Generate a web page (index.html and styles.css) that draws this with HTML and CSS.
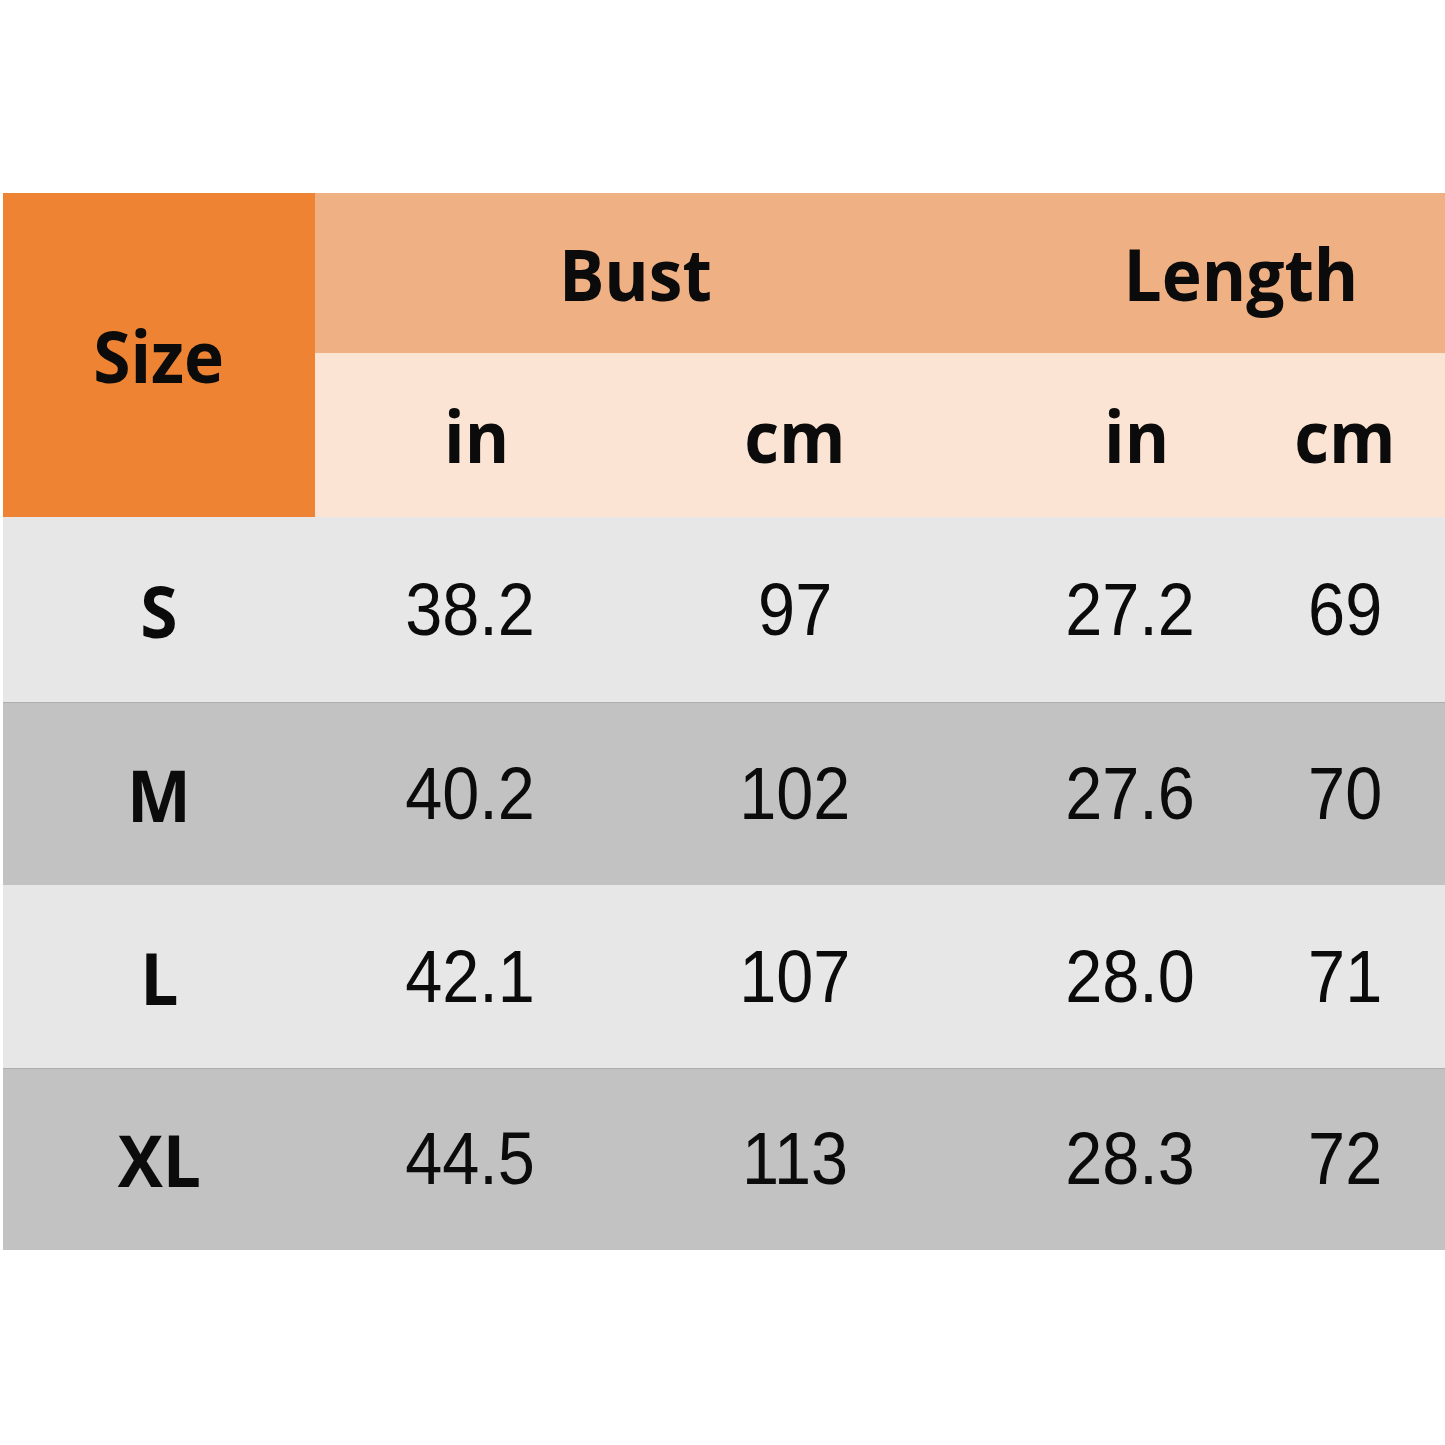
FILE: index.html
```html
<!DOCTYPE html>
<html lang="en">
<head>
<meta charset="utf-8">
<title>Size Chart</title>
<link rel="stylesheet" href="styles.css">
</head>
<body>
<div class="chart">
  <div class="cell size-head"><span class="h">Size</span></div>
  <div class="cell group bust"><span class="h">Bust</span></div>
  <div class="cell group length"><span class="h">Length</span></div>
  <div class="cell unit unit-in"><span class="h">in</span></div>
  <div class="cell unit"><span class="h">cm</span></div>
  <div class="cell unit unit-in"><span class="h">in</span></div>
  <div class="cell unit last"><span class="h">cm</span></div>

  <div class="cell light"><span class="h">S</span></div>
  <div class="cell light"><span class="n">38.2</span></div>
  <div class="cell light"><span class="n">97</span></div>
  <div class="cell light"><span class="n">27.2</span></div>
  <div class="cell light last"><span class="n">69</span></div>

  <div class="cell dark"><span class="h">M</span></div>
  <div class="cell dark"><span class="n">40.2</span></div>
  <div class="cell dark"><span class="n">102</span></div>
  <div class="cell dark"><span class="n">27.6</span></div>
  <div class="cell dark last"><span class="n">70</span></div>

  <div class="cell light"><span class="h">L</span></div>
  <div class="cell light"><span class="n">42.1</span></div>
  <div class="cell light"><span class="n">107</span></div>
  <div class="cell light"><span class="n">28.0</span></div>
  <div class="cell light last"><span class="n">71</span></div>

  <div class="cell dark"><span class="h">XL</span></div>
  <div class="cell dark"><span class="n">44.5</span></div>
  <div class="cell dark"><span class="n">113</span></div>
  <div class="cell dark"><span class="n">28.3</span></div>
  <div class="cell dark last"><span class="n">72</span></div>
</div>
</body>
</html>
```
FILE: styles.css
```css
html, body {
  margin: 0;
  padding: 0;
  background: #ffffff;
}

body {
  padding: 193px 0 0 3px;
  font-family: "Liberation Sans", Arial, sans-serif;
  color: #0b0b0b;
}

.chart {
  display: grid;
  grid-template-columns: 312px 310px 340px 330px 150px;
  grid-template-rows: 160px 164px 185px 183px 183px 182px;
  width: 1442px;
}

.cell {
  display: flex;
  align-items: center;
  justify-content: center;
}

.cell.last {
  padding-right: 50px;
}

.size-head {
  grid-row: 1 / span 2;
  background: #ee8433;
}

.group {
  background: #efb084;
}

.bust {
  grid-column: 2 / span 2;
  padding-right: 10px;
}

.length {
  grid-column: 4 / span 2;
  padding-left: 72px;
}

.unit {
  background: #fbe4d4;
}

.unit-in {
  padding-left: 14px;
}

.light {
  background: #e7e7e7;
}

.dark {
  background: #c2c2c2;
  box-shadow: inset 0 1px 0 #aeaeae;
}

.h {
  display: inline-block;
  font-family: "Open Sans", "DejaVu Sans", sans-serif;
  font-weight: 700;
  font-size: 72px;
  line-height: 1;
  transform: scaleX(0.94);
}

.n {
  display: inline-block;
  font-family: "Liberation Sans", Arial, sans-serif;
  font-weight: 400;
  font-size: 74px;
  line-height: 1;
  transform: scaleX(0.9);
}
```
